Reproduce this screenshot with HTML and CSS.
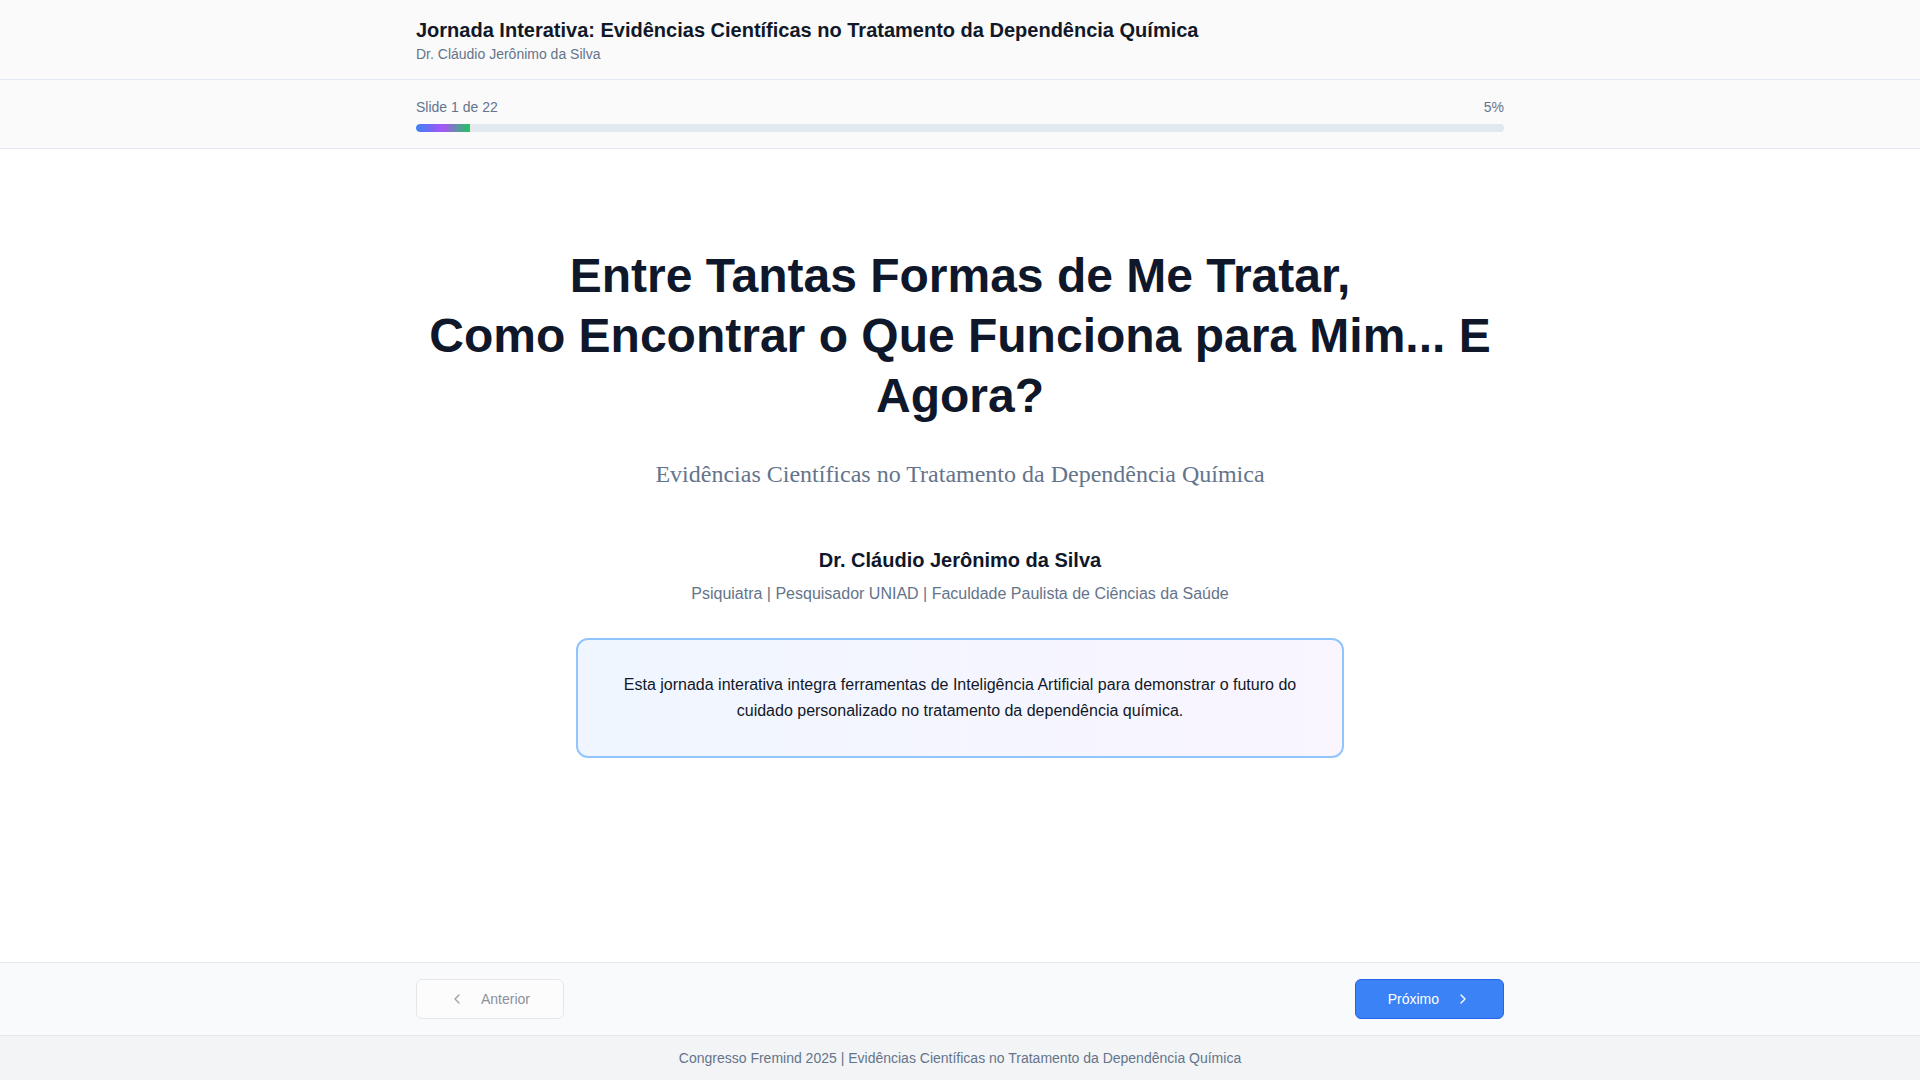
FILE: index.html
```html
<!DOCTYPE html>
<html lang="pt-BR">
<head>
<meta charset="utf-8">
<title>Jornada Interativa</title>
<link rel="stylesheet" href="styles.css">
</head>
<body>
<div class="page">
  <header class="topbar">
    <div class="container">
      <h1 class="topbar-title">Jornada Interativa: Evidências Científicas no Tratamento da Dependência Química</h1>
      <p class="topbar-sub">Dr. Cláudio Jerônimo da Silva</p>
    </div>
  </header>

  <section class="progress">
    <div class="container">
      <div class="progress-meta">
        <span>Slide 1 de 22</span>
        <span>5%</span>
      </div>
      <div class="progress-track"><div class="progress-fill" style="width:5%"></div></div>
    </div>
  </section>

  <main class="slide">
    <div class="container slide-inner">
      <h2 class="slide-title">Entre Tantas Formas de Me Tratar,<br>Como Encontrar o Que Funciona para Mim... E Agora?</h2>
      <p class="slide-subtitle">Evidências Científicas no Tratamento da Dependência Química</p>
      <h3 class="speaker">Dr. Cláudio Jerônimo da Silva</h3>
      <p class="speaker-role">Psiquiatra | Pesquisador UNIAD | Faculdade Paulista de Ciências da Saúde</p>
      <div class="intro-box">
        <p>Esta jornada interativa integra ferramentas de Inteligência Artificial para demonstrar o futuro do cuidado personalizado no tratamento da dependência química.</p>
      </div>
    </div>
  </main>

  <nav class="slide-nav">
    <div class="container nav-inner">
      <button class="btn btn-prev" disabled>
        <svg width="16" height="16" viewBox="0 0 24 24" fill="none" stroke="currentColor" stroke-width="2" stroke-linecap="round" stroke-linejoin="round"><path d="m15 18-6-6 6-6"/></svg>
        <span>Anterior</span>
      </button>
      <button class="btn btn-next">
        <span>Próximo</span>
        <svg width="16" height="16" viewBox="0 0 24 24" fill="none" stroke="currentColor" stroke-width="2" stroke-linecap="round" stroke-linejoin="round"><path d="m9 18 6-6-6-6"/></svg>
      </button>
    </div>
  </nav>

  <footer class="page-footer">
    Congresso Fremind 2025 | Evidências Científicas no Tratamento da Dependência Química
  </footer>
</div>
</body>
</html>
```

FILE: styles.css
```css
* { box-sizing: border-box; }

html, body {
  margin: 0;
  padding: 0;
}

body {
  font-family: "Liberation Sans", Arial, Helvetica, sans-serif;
  color: #111827;
  background: #ffffff;
}

.page {
  min-height: 100vh;
  display: flex;
  flex-direction: column;
}

.container {
  max-width: 1152px;
  margin: 0 auto;
  padding: 0 32px;
  width: 100%;
}

/* Header */
.topbar {
  background: #fafafa;
  border-bottom: 1px solid #e2e8f0;
  padding: 16px 0 15px;
}

.topbar-title {
  margin: 0;
  font-size: 20px;
  line-height: 28px;
  font-weight: 700;
  color: #111827;
}

.topbar-sub {
  margin: 0;
  font-size: 14px;
  line-height: 20px;
  color: #64748b;
}

/* Progress */
.progress {
  background: #fafafa;
  border-bottom: 1px solid #e2e8f0;
  padding: 17px 0 16px;
}

.progress-meta {
  display: flex;
  justify-content: space-between;
  font-size: 14px;
  line-height: 20px;
  color: #64748b;
  margin-bottom: 7px;
}

.progress-track {
  height: 8px;
  border-radius: 9999px;
  background: #e2e8f0;
  overflow: hidden;
}

.progress-fill {
  height: 100%;
  border-radius: 9999px 0 0 9999px;
  background: linear-gradient(to right, #3b82f6, #a855f7, #22c55e);
}

/* Slide */
.slide {
  flex: 1;
  background: #ffffff;
  padding-top: 97px;
}

.slide-inner {
  display: flex;
  flex-direction: column;
  align-items: center;
  text-align: center;
}

.slide-title {
  margin: 0 0 32px;
  font-size: 48px;
  line-height: 60px;
  font-weight: 700;
  color: #0f172a;
}

.slide-subtitle {
  margin: 0 0 56px;
  font-family: "Liberation Serif", "Times New Roman", serif;
  font-size: 24px;
  line-height: 32px;
  color: #64748b;
}

.speaker {
  margin: 0 0 8px;
  font-size: 20px;
  line-height: 28px;
  font-weight: 700;
  color: #0f172a;
}

.speaker-role {
  margin: 0 0 32px;
  font-size: 16px;
  line-height: 24px;
  color: #64748b;
}

.intro-box {
  width: 768px;
  max-width: 100%;
  padding: 32px;
  border: 2px solid #93c5fd;
  border-radius: 12px;
  background: linear-gradient(to right, #eff6ff, #faf5ff);
}

.intro-box p {
  margin: 0;
  font-size: 16px;
  line-height: 26px;
  color: #111827;
}

/* Navigation */
.slide-nav {
  background: #f9fafb;
  border-top: 1px solid #e2e8f0;
  padding: 16px 0 16px;
}

.nav-inner {
  display: flex;
  justify-content: space-between;
  align-items: center;
}

.btn {
  display: inline-flex;
  align-items: center;
  gap: 16px;
  height: 40px;
  padding: 0 33px 0 32px;
  font-family: "Liberation Sans", Arial, Helvetica, sans-serif;
  font-size: 14px;
  line-height: 20px;
  border-radius: 6px;
  cursor: pointer;
}

.btn-prev {
  background: #fcfcfc;
  border: 1px solid #e5e7eb;
  color: #9ca3af;
  cursor: not-allowed;
}

.btn-prev span { color: #8b919c; }

.btn-next {
  background: #3b82f6;
  border: 1px solid #2563eb;
  color: #ffffff;
  padding: 0 32px 0 32px;
}

/* Footer */
.page-footer {
  background: #f3f4f6;
  border-top: 1px solid #e2e8f0;
  padding: 12px 0 12px;
  text-align: center;
  font-size: 14px;
  line-height: 20px;
  color: #64748b;
}
```
